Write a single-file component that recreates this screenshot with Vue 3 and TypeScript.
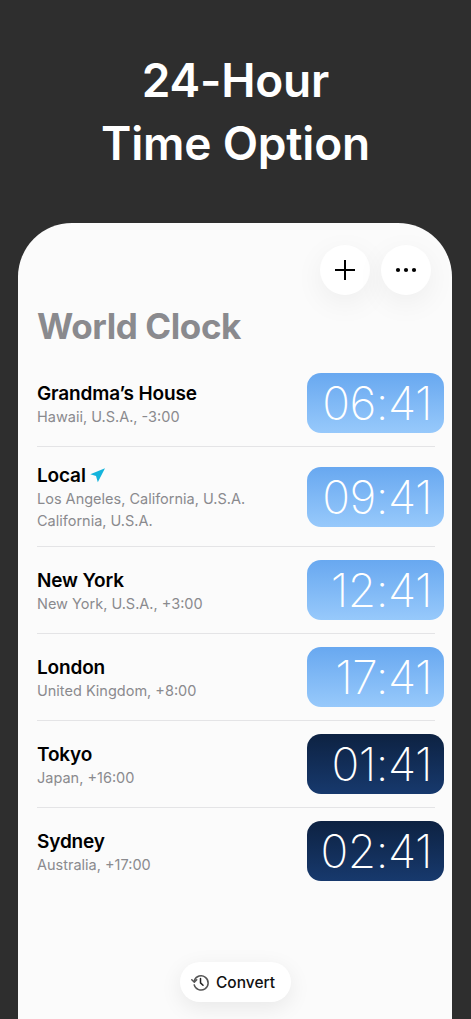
<script setup lang="ts">
interface City {
  name: string;
  lines: string[];
  time: string;
  night: boolean;
  local?: boolean;
}

const cities: City[] = [
  { name: "Grandma’s House", lines: ["Hawaii, U.S.A., -3:00"], time: "06:41", night: false },
  { name: "Local", lines: ["Los Angeles, California, U.S.A.", "California, U.S.A."], time: "09:41", night: false, local: true },
  { name: "New York", lines: ["New York, U.S.A., +3:00"], time: "12:41", night: false },
  { name: "London", lines: ["United Kingdom, +8:00"], time: "17:41", night: false },
  { name: "Tokyo", lines: ["Japan, +16:00"], time: "01:41", night: true },
  { name: "Sydney", lines: ["Australia, +17:00"], time: "02:41", night: true },
];
</script>

<template>
  <main class="page">
    <h1 class="headline">24-Hour<br />Time Option</h1>
    <section class="card">
      <div class="actions">
        <button class="round" aria-label="Add">
          <svg width="24" height="24" viewBox="0 0 24 24"><path d="M12 2v20M2 12h20" stroke="#000" stroke-width="2" fill="none" /></svg>
        </button>
        <button class="round" aria-label="More">
          <svg width="24" height="24" viewBox="0 0 24 24" fill="#000"><circle cx="4" cy="12" r="2.1" /><circle cx="12" cy="12" r="2.1" /><circle cx="20" cy="12" r="2.1" /></svg>
        </button>
      </div>
      <h2 class="title">World Clock</h2>
      <ul class="list">
        <li v-for="c in cities" :key="c.name" class="row">
          <div class="info">
            <div class="name">
              {{ c.name }}
              <svg v-if="c.local" class="arrow" width="16" height="16" viewBox="0 0 16 16"><path d="M15 1.2.3 7.2 6 9l1.8 6.3z" fill="#14b4dc" /></svg>
            </div>
            <div v-for="l in c.lines" :key="l" class="sub">{{ l }}</div>
          </div>
          <div class="time" :class="{ night: c.night }">{{ c.time }}</div>
        </li>
      </ul>
      <div class="convert-wrap">
        <button class="convert">
          <svg width="19" height="19" viewBox="0 0 24 24" fill="none" stroke="#555" stroke-width="1.9" stroke-linecap="round" stroke-linejoin="round">
            <path d="M4.2 9.5A9 9 0 1 1 4 15" />
            <path d="M1 8.5l3.2 3 3-3" />
            <path d="M12 7v5.5l3.2 3" stroke="#222" />
          </svg>
          Convert
        </button>
      </div>
    </section>
  </main>
</template>

<style>
html, body { margin: 0; background: #2e2e2e; }
</style>

<style scoped>
.page {
  height: 1019px;
  overflow: hidden;
  background: #2e2e2e;
  font-family: Inter, "Liberation Sans", sans-serif;
  display: flex;
  flex-direction: column;
}
.headline {
  flex: none;
  margin: 0;
  padding-top: 49px;
  height: 223px;
  box-sizing: border-box;
  color: #fff;
  font-size: 46px;
  font-weight: 600;
  line-height: 63px;
  text-align: center;
  letter-spacing: -0.2px;
}
.card {
  margin: 0 19px 0 18px;
  flex: 1;
  background: #fbfbfb;
  border-radius: 54px 54px 0 0;
  padding: 22px 0 0 19px;
  display: flex;
  flex-direction: column;
  min-height: 0;
}
.actions {
  display: flex;
  justify-content: flex-end;
  gap: 11px;
  padding-right: 21px;
}
.round {
  width: 50px;
  height: 50px;
  border: 0;
  padding: 0;
  border-radius: 50%;
  background: #fff;
  box-shadow: 0 8px 30px rgba(0, 0, 0, 0.06);
  display: flex;
  align-items: center;
  justify-content: center;
}
.title {
  margin: 11px 0 0;
  height: 40px;
  font-size: 35px;
  line-height: 40px;
  font-weight: 700;
  color: #8a8a8e;
  letter-spacing: -0.4px;
}
.list {
  list-style: none;
  margin: 14px 17px 0 0;
  padding: 0;
}
.row {
  display: flex;
  align-items: center;
  justify-content: space-between;
  min-height: 60px;
  padding: 13px 0;
  border-bottom: 1px solid #e4e4e6;
}
.row:last-child { border-bottom: 0; }
.info {
  padding: 4px 0 1px;
}
.name {
  font-size: 19px;
  line-height: 24px;
  font-weight: 600;
  color: #000;
  letter-spacing: -0.15px;
  display: flex;
  align-items: center;
  gap: 4px;
}
.arrow { margin-top: -3px; }
.sub {
  font-size: 14.5px;
  line-height: 22px;
  color: #8a8a8e;
}
.time {
  width: 137px;
  height: 60px;
  margin-right: -9px;
  flex: none;
  box-sizing: border-box;
  border-radius: 14px;
  padding-right: 12px;
  background: linear-gradient(#68a8f0, #97c9fb);
  color: #fff;
  font-size: 46px;
  font-weight: 250;
  line-height: 60px;
  text-align: right;
  letter-spacing: -0.5px;
}
.time.night {
  background: linear-gradient(#0d2242, #17396d);
}
.convert-wrap {
  margin-top: auto;
  padding: 0 0 17px;
  margin-left: -19px;
  display: flex;
  justify-content: center;
}
.convert {
  height: 40px;
  width: 111px;
  border: 0;
  padding: 0 4px 0 0;
  border-radius: 20px;
  background: #fff;
  box-shadow: 0 6px 22px rgba(0, 0, 0, 0.08);
  font-family: inherit;
  font-size: 15.5px;
  font-weight: 500;
  color: #111;
  display: flex;
  align-items: center;
  justify-content: center;
  gap: 6px;
}
</style>
